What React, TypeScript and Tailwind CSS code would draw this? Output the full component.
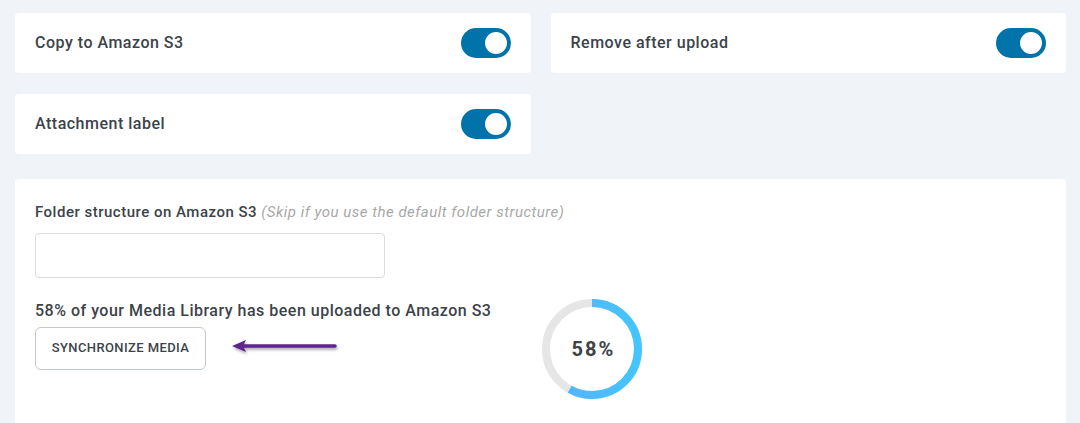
import React from "react";

function Toggle() {
  return (
    <div className="w-[50px] h-[30px] rounded-full bg-[#0073aa] flex items-center justify-end pr-[2px]">
      <div className="w-[26px] h-[26px] rounded-full bg-white border-2 border-[#0073aa]" />
    </div>
  );
}

function ToggleCard({ label }: { label: string }) {
  return (
    <div className="h-[60px] bg-white rounded-[4px] flex items-center justify-between pl-5 pr-5">
      <span className="text-[16px] font-medium text-[#3c434a] tracking-[0.5px]">{label}</span>
      <Toggle />
    </div>
  );
}

function Ring({ pct }: { pct: number }) {
  const r = 46;
  const c = 2 * Math.PI * r;
  return (
    <div className="relative w-[102px] h-[102px]">
      <svg width="102" height="102" viewBox="0 0 102 102">
        <defs>
          <linearGradient id="g" x1="0" y1="0" x2="0" y2="1">
            <stop offset="0%" stopColor="#5ab0fb" />
            <stop offset="100%" stopColor="#43c6fb" />
          </linearGradient>
        </defs>
        <circle cx="51" cy="51" r={r} fill="none" stroke="#e6e6e6" strokeWidth="8" />
        <circle
          cx="51"
          cy="51"
          r={r}
          fill="none"
          stroke="url(#g)"
          strokeWidth="8"
          strokeDasharray={`${(c * pct) / 100} ${c}`}
          transform="rotate(-90 51 51)"
        />
      </svg>
      <div className="absolute inset-0 flex items-center justify-center text-[20px] font-bold text-[#3c434a] tracking-[2px] pl-[2px]">
        {pct}%
      </div>
    </div>
  );
}

export default function App() {
  return (
    <div className="w-[1080px] h-[423px] overflow-hidden bg-[#f0f3f8] px-[15px] pt-[13px] font-['Roboto',sans-serif]">
      <div className="grid grid-cols-2 gap-x-5 gap-y-[21px] w-[1051px]">
        <ToggleCard label="Copy to Amazon S3" />
        <ToggleCard label="Remove after upload" />
        <ToggleCard label="Attachment label" />
      </div>
      <div className="mt-[25px] w-[1051px] h-[300px] bg-white rounded-[4px] px-5 pt-[22px]">
        <div className="text-[15px] font-medium text-[#3c434a] tracking-[0.5px]">
          Folder structure on Amazon S3{" "}
          <span className="italic font-normal text-[#a8a8a8]">(Skip if you use the default folder structure)</span>
        </div>
        <div className="mt-[9px] w-[350px] h-[45px] border border-[#dcdcdc] rounded-[4px]" />
        <div className="flex items-start">
          <div className="pt-[21px]">
            <div className="text-[16px] font-medium text-[#3c434a] tracking-[0.5px]">
              58% of your Media Library has been uploaded to Amazon S3
            </div>
            <div className="mt-[4px] flex items-center">
              <button className="w-[171px] h-[43px] border border-[#bfc6d4] rounded-[6px] text-[13px] font-medium text-[#3c434a] tracking-[0.4px] bg-white">
                SYNCHRONIZE MEDIA
              </button>
              <svg width="110" height="16" viewBox="0 0 110 16" className="ml-[25px] mt-[-3px]" style={{ filter: "drop-shadow(1px 2px 1.5px rgba(0,0,0,0.35))" }}>
                <line x1="10" y1="7" x2="104" y2="7" stroke="#5e2590" strokeWidth="3.5" strokeLinecap="round" />
                <polygon points="1,7 15,1 12,7 15,13" fill="#5e2590" />
              </svg>
            </div>
          </div>
          <div className="ml-[50px] mt-[20px]">
            <Ring pct={58} />
          </div>
        </div>
      </div>
    </div>
  );
}
